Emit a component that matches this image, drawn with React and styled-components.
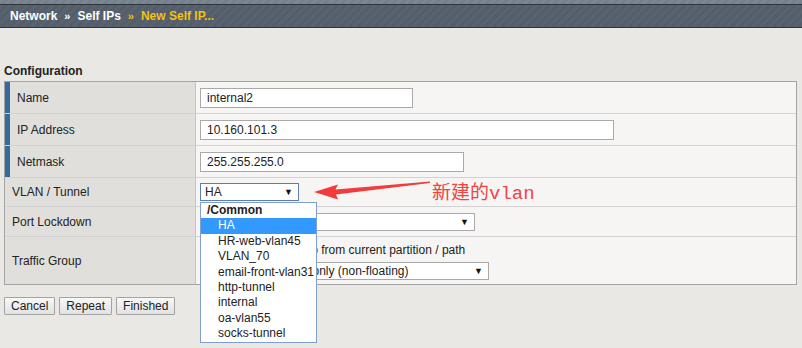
import React from 'react';
import styled, { createGlobalStyle } from 'styled-components';

const GlobalStyle = createGlobalStyle`
  html, body {
    margin: 0;
    padding: 0;
    background: #e9e8e4;
    font-family: 'Liberation Sans', Arial, sans-serif;
    font-size: 12px;
    color: #222;
  }
`;

const Page = styled.div`
  width: 802px;
  height: 348px;
  overflow: hidden;
`;

const TopStripe = styled.div`
  height: 4px;
  background: repeating-linear-gradient(135deg, #7b8792 0 3px, #74808b 3px 6px);
`;

const Bar = styled.div`
  display: flex;
  align-items: center;
  height: 22px;
  padding-left: 10px;
  border-top: 1px solid #2f3338;
  border-bottom: 1px solid #2f3338;
  background: repeating-linear-gradient(135deg, #58636f 0 3px, #535e6a 3px 6px);
  font-weight: bold;
  font-size: 12px;
`;

const Crumb = styled.span`
  color: ${(p) => (p.$current ? '#f2c115' : '#fff')};
`;

const Sep = styled.span`
  margin: 0 7px;
  font-size: 11px;
  color: ${(p) => (p.$last ? '#f2c115' : '#fff')};
`;

const Content = styled.div`
  padding: 36px 5px 0 4px;
`;

const SectionTitle = styled.div`
  font-weight: bold;
  font-size: 12px;
  line-height: 14px;
  margin-bottom: 3px;
`;

const Table = styled.div`
  width: 791px;
  border: 1px solid #a4a4a4;
`;

const Row = styled.div`
  display: grid;
  grid-template-columns: 191px 1fr;
  height: ${(p) => p.$h}px;
  & + & {
    border-top: 1px solid #d2d2d2;
  }
`;

const Label = styled.div`
  display: flex;
  align-items: center;
  background: #e0dfdc;
  border-right: 1px solid #c4c4c4;
  border-left: ${(p) => (p.$accent ? '5px solid #356a9b' : 'none')};
  padding-left: 7px;
`;

const Value = styled.div`
  display: flex;
  flex-direction: column;
  justify-content: center;
  align-items: flex-start;
  background: #f6f5f3;
  padding-left: 4px;
`;

const TextInput = styled.div`
  box-sizing: border-box;
  width: ${(p) => p.$w}px;
  height: 20px;
  border: 1px solid #a9a9a9;
  background: #fff;
  padding-left: 6px;
  line-height: 18px;
  margin-top: 1px;
`;

const SelectWrap = styled.div`
  position: relative;
`;

const SelectBox = styled.div`
  box-sizing: border-box;
  display: flex;
  align-items: center;
  justify-content: space-between;
  width: ${(p) => p.$w}px;
  height: 18px;
  border: 1px solid ${(p) => (p.$open ? '#5a7fb0' : '#a9a9a9')};
  background: #fff;
  padding: 0 5px 0 ${(p) => p.$pad || 4}px;
  line-height: 16px;
  white-space: nowrap;
`;

const Caret = styled.span`
  font-size: 9px;
  color: #111;
`;

const List = styled.div`
  position: absolute;
  top: 19px;
  left: 0;
  z-index: 5;
  box-sizing: border-box;
  width: 117px;
  border: 1px solid #7f9fcf;
  background: #fff;
  padding-bottom: 1px;
`;

const Option = styled.div`
  height: 15.375px;
  line-height: 15.375px;
  padding-left: ${(p) => (p.$group ? 6 : 17)}px;
  font-weight: ${(p) => (p.$group ? 'bold' : 'normal')};
  background: ${(p) => (p.$selected ? '#3399ff' : 'transparent')};
  color: ${(p) => (p.$selected ? '#fff' : '#222')};
  white-space: nowrap;
  overflow: hidden;
`;

const Note = styled.div`
  position: absolute;
  left: 113px;
  top: -6px;
  display: flex;
  align-items: center;
  gap: 1px;
  z-index: 5;
`;

const NoteText = styled.span`
  font-family: 'Liberation Mono', 'Noto Sans CJK SC', monospace;
  font-size: 19px;
  color: #f04444;
  white-space: nowrap;
`;

const CheckLine = styled.div`
  display: flex;
  align-items: center;
  height: 16px;
  margin-bottom: 4px;
`;

const Check = styled.span`
  box-sizing: border-box;
  width: 13px;
  height: 13px;
  border: 1px solid #888;
  background: #fff;
  margin: 0 3px 0 2px;
`;

const Buttons = styled.div`
  display: flex;
  gap: 4px;
  margin-top: 12px;
`;

const Button = styled.button`
  height: 18px;
  padding: 0 6px;
  border: 1px solid #a3a3a3;
  border-radius: 1px;
  background: linear-gradient(#f8f8f8, #e2e2e2);
  font-family: 'Liberation Sans', Arial, sans-serif;
  font-size: 12px;
  color: #222;
  line-height: 16px;
`;

const vlans = ['HA', 'HR-web-vlan45', 'VLAN_70', 'email-front-vlan31', 'http-tunnel', 'internal', 'oa-vlan55', 'socks-tunnel'];

const Arrow = () => (
  <svg width="118" height="24" viewBox="0 0 118 24">
    <path d="M1 13 L25 5.5 L22.5 10.5 L117 2.5 L117 4 L23 15.5 L25 20.5 Z" fill="#f03c3c" />
  </svg>
);

const App = () => (
  <Page>
    <GlobalStyle />
    <TopStripe />
    <Bar>
      <Crumb>Network</Crumb>
      <Sep>»</Sep>
      <Crumb>Self IPs</Crumb>
      <Sep $last>»</Sep>
      <Crumb $current>New Self IP...</Crumb>
    </Bar>
    <Content>
      <SectionTitle>Configuration</SectionTitle>
      <Table>
        <Row $h={31}>
          <Label $accent>Name</Label>
          <Value><TextInput $w={213}>internal2</TextInput></Value>
        </Row>
        <Row $h={31}>
          <Label $accent>IP Address</Label>
          <Value><TextInput $w={414}>10.160.101.3</TextInput></Value>
        </Row>
        <Row $h={31}>
          <Label $accent>Netmask</Label>
          <Value><TextInput $w={264}>255.255.255.0</TextInput></Value>
        </Row>
        <Row $h={28}>
          <Label>VLAN / Tunnel</Label>
          <Value>
            <SelectWrap>
              <SelectBox $w={99} $open>HA<Caret>▼</Caret></SelectBox>
              <List>
                <Option $group>/Common</Option>
                {vlans.map((v, i) => (
                  <Option key={v} $selected={i === 0}>{v}</Option>
                ))}
              </List>
              <Note>
                <Arrow />
                <NoteText>新建的vlan</NoteText>
              </Note>
            </SelectWrap>
          </Value>
        </Row>
        <Row $h={29}>
          <Label>Port Lockdown</Label>
          <Value><SelectBox $w={275}>Allow Default<Caret>▼</Caret></SelectBox></Value>
        </Row>
        <Row $h={47}>
          <Label>Traffic Group</Label>
          <Value>
            <CheckLine><Check />Inherit traffic group from current partition / path</CheckLine>
            <SelectBox $w={289} $pad={15}>traffic-group-local-only (non-floating)<Caret>▼</Caret></SelectBox>
          </Value>
        </Row>
      </Table>
      <Buttons>
        <Button>Cancel</Button>
        <Button>Repeat</Button>
        <Button>Finished</Button>
      </Buttons>
    </Content>
  </Page>
);

export default App;
